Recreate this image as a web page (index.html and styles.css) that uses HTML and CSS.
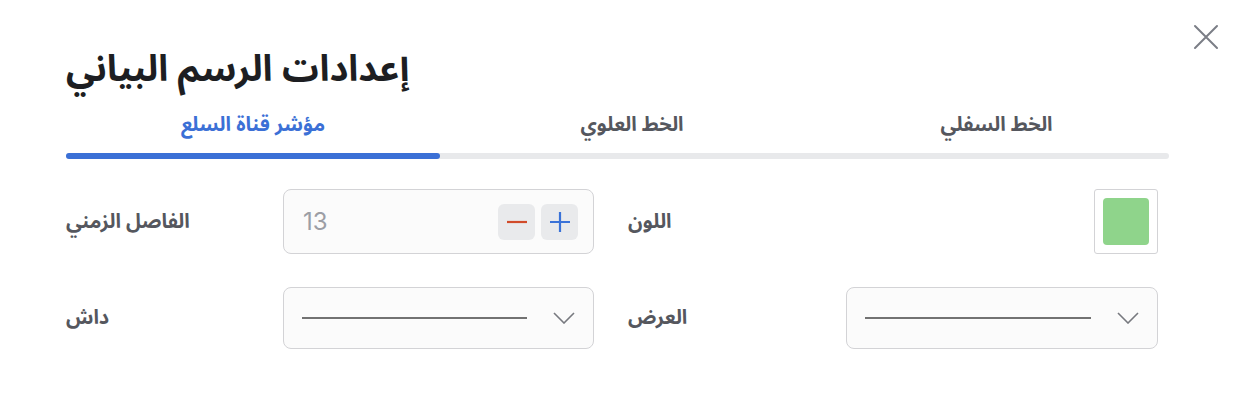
FILE: index.html
```html
<!DOCTYPE html>
<html lang="ar">
<head>
<meta charset="utf-8">
<title>إعدادات الرسم البياني</title>
<link rel="stylesheet" href="styles.css">
</head>
<body>
<div class="dialog">
  <button class="close" aria-label="إغلاق">
    <svg width="26" height="26" viewBox="0 0 26 26"><path d="M2 2 L24 24 M24 2 L2 24" stroke="#7b7e86" stroke-width="2" stroke-linecap="round" fill="none"/></svg>
  </button>
  <h1 class="title">إعدادات الرسم البياني</h1>
  <div class="tabs">
    <div class="tab-list">
      <div class="tab tab-active">مؤشر قناة السلع</div>
      <div class="tab tab-mid">الخط العلوي</div>
      <div class="tab tab-last">الخط السفلي</div>
    </div>
    <div class="track"><div class="indicator"></div></div>
  </div>
  <div class="form">
    <div class="label">الفاصل الزمني</div>
    <div class="field number">
      <span class="value">13</span>
      <div class="steppers">
        <span class="step"><svg width="20" height="20" viewBox="0 0 20 20"><path d="M0 10 H20" stroke="#d14b2a" stroke-width="2.2"/></svg></span>
        <span class="step"><svg width="20" height="20" viewBox="0 0 20 20"><path d="M0 10 H20 M10 0 V20" stroke="#3a72d8" stroke-width="2.2"/></svg></span>
      </div>
    </div>
    <div class="label">اللون</div>
    <div class="swatch"><div class="swatch-fill"></div></div>

    <div class="label">داش</div>
    <div class="field select">
      <span class="line"></span>
      <svg class="chev" width="22" height="12" viewBox="0 0 22 12"><path d="M1 1 L11 11 L21 1" stroke="#77797f" stroke-width="1.6" fill="none"/></svg>
    </div>
    <div class="label">العرض</div>
    <div class="field select">
      <span class="line"></span>
      <svg class="chev" width="22" height="12" viewBox="0 0 22 12"><path d="M1 1 L11 11 L21 1" stroke="#77797f" stroke-width="1.6" fill="none"/></svg>
    </div>
  </div>
</div>
</body>
</html>
```
FILE: styles.css
```css
* { box-sizing: border-box; }
html, body { margin: 0; padding: 0; background: #ffffff; }
body {
  width: 1242px;
  height: 414px;
  overflow: hidden;
  font-family: "Noto Sans Arabic", "Noto Naskh Arabic", "DejaVu Sans", sans-serif;
  color: #55575e;
}
.dialog {
  position: relative;
  padding: 44px 73px 0 66px;
}
.close {
  position: absolute;
  top: 24px;
  left: 1193px;
  width: 26px;
  height: 26px;
  padding: 0;
  border: 0;
  background: none;
  display: flex;
}
.title {
  margin: 0;
  font-size: 36.5px;
  line-height: 52px;
  font-weight: 700;
  color: #1d1e22;
}
.tabs {
  margin-top: 10px;
}
.tab-list {
  display: grid;
  grid-template-columns: 374px 384px 345px;
}
.tab {
  text-align: center;
  font-size: 20px;
  font-weight: 700;
  line-height: 38px;
  color: #55575e;
  padding-bottom: 9px;
}
.tab-active { color: #3b70d6; }
.track {
  height: 6px;
  border-radius: 3px;
  background: #e8e9eb;
}
.indicator {
  width: 33.9%;
  height: 6px;
  border-radius: 3px;
  background: #3b70d6;
}
.form {
  margin-top: 30px;
  display: grid;
  grid-template-columns: 183px 311px 184px 312px;
  grid-template-rows: 65px 62px;
  column-gap: 34px;
  row-gap: 33px;
  align-items: center;
}
.label {
  font-size: 20px;
  font-weight: 700;
  color: #55575e;
}
.field {
  height: 100%;
  border: 1px solid #d3d3d6;
  border-radius: 8px;
  background: #fbfbfb;
  display: flex;
  align-items: center;
}
.number {
  padding: 0 15px 0 19px;
  justify-content: space-between;
}
.value {
  font-family: Inter, "Liberation Sans", sans-serif;
  font-size: 24px;
  color: #9c9ea5;
}
.steppers {
  display: flex;
  gap: 6px;
}
.step {
  width: 37px;
  height: 36px;
  border-radius: 6px;
  background: #e9eaec;
  display: flex;
  align-items: center;
  justify-content: center;
}
.swatch {
  justify-self: end;
  width: 64px;
  height: 65px;
  border: 1px solid #d3d3d6;
  border-radius: 3px;
  padding: 8px;
  background: #ffffff;
}
.swatch-fill {
  width: 100%;
  height: 100%;
  border-radius: 4px;
  background: #8fd48b;
}
.select {
  padding: 0 18px 0 18px;
  gap: 26px;
}
.line {
  flex: 1;
  height: 2px;
  background: #727272;
}
.chev { flex: none; }
```
